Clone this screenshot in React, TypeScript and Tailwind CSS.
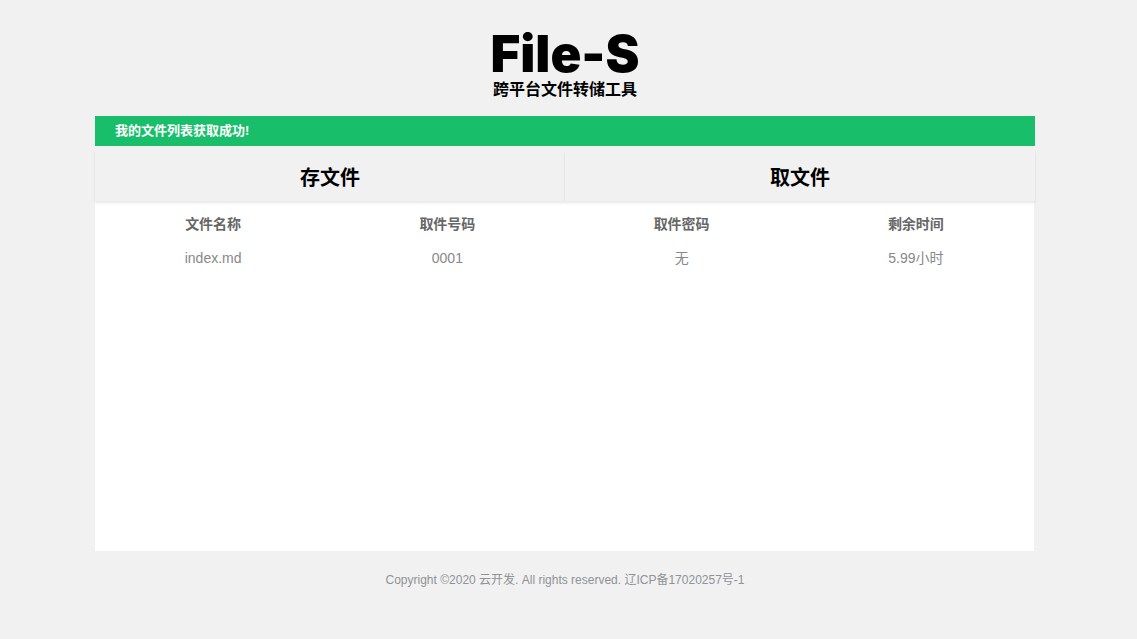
const columns = ['文件名称', '取件号码', '取件密码', '剩余时间'];
const files = [['index.md', '0001', '无', '5.99小时']];
const tabs = ['存文件', '取文件'];

export default function App() {
  return (
    <div className="min-h-screen bg-[#f1f1f1] pr-[7px] font-['Liberation_Sans','Noto_Sans_CJK_SC',sans-serif]">
      <div className="mx-auto w-full max-w-[940px] pt-[25px]">
        <header className="text-center text-black">
          <h1 className="font-['Inter','Liberation_Sans',sans-serif] text-[51px] leading-[57px] font-black">File-S</h1>
          <p className="text-base leading-4 font-bold">跨平台文件转储工具</p>
        </header>

        <div role="status" className="mt-[18px] bg-[#19be6b] px-5 text-[13px] leading-[30px] font-bold text-white">
          我的文件列表获取成功!
        </div>

        <main>
          <nav className="relative mt-1 flex">
            {tabs.map((tab) => (
              <button
                key={tab}
                type="button"
                className="h-[51px] flex-1 bg-[#f1f1f1] pt-1 text-xl font-bold text-black shadow-[0_2px_3px_rgba(0,0,0,0.1)]"
              >
                {tab}
              </button>
            ))}
          </nav>
          <section className="mr-px min-h-[350px] bg-white px-px pt-[5px]">
            <table className="w-full table-fixed text-center text-sm">
              <thead>
                <tr className="h-9 text-[#666666]">
                  {columns.map((column) => (
                    <th key={column} scope="col" className="font-bold">{column}</th>
                  ))}
                </tr>
              </thead>
              <tbody>
                {files.map((file) => (
                  <tr key={file[0]} className="h-8 text-[#888888]">
                    {file.map((value, index) => (
                      <td key={columns[index]}>{value}</td>
                    ))}
                  </tr>
                ))}
              </tbody>
            </table>
          </section>
        </main>

        <footer className="py-5 text-center text-xs leading-[18px] text-[#8f9296]">
          Copyright ©2020 云开发. All rights reserved. 辽ICP备17020257号-1
        </footer>
      </div>
    </div>
  );
}
